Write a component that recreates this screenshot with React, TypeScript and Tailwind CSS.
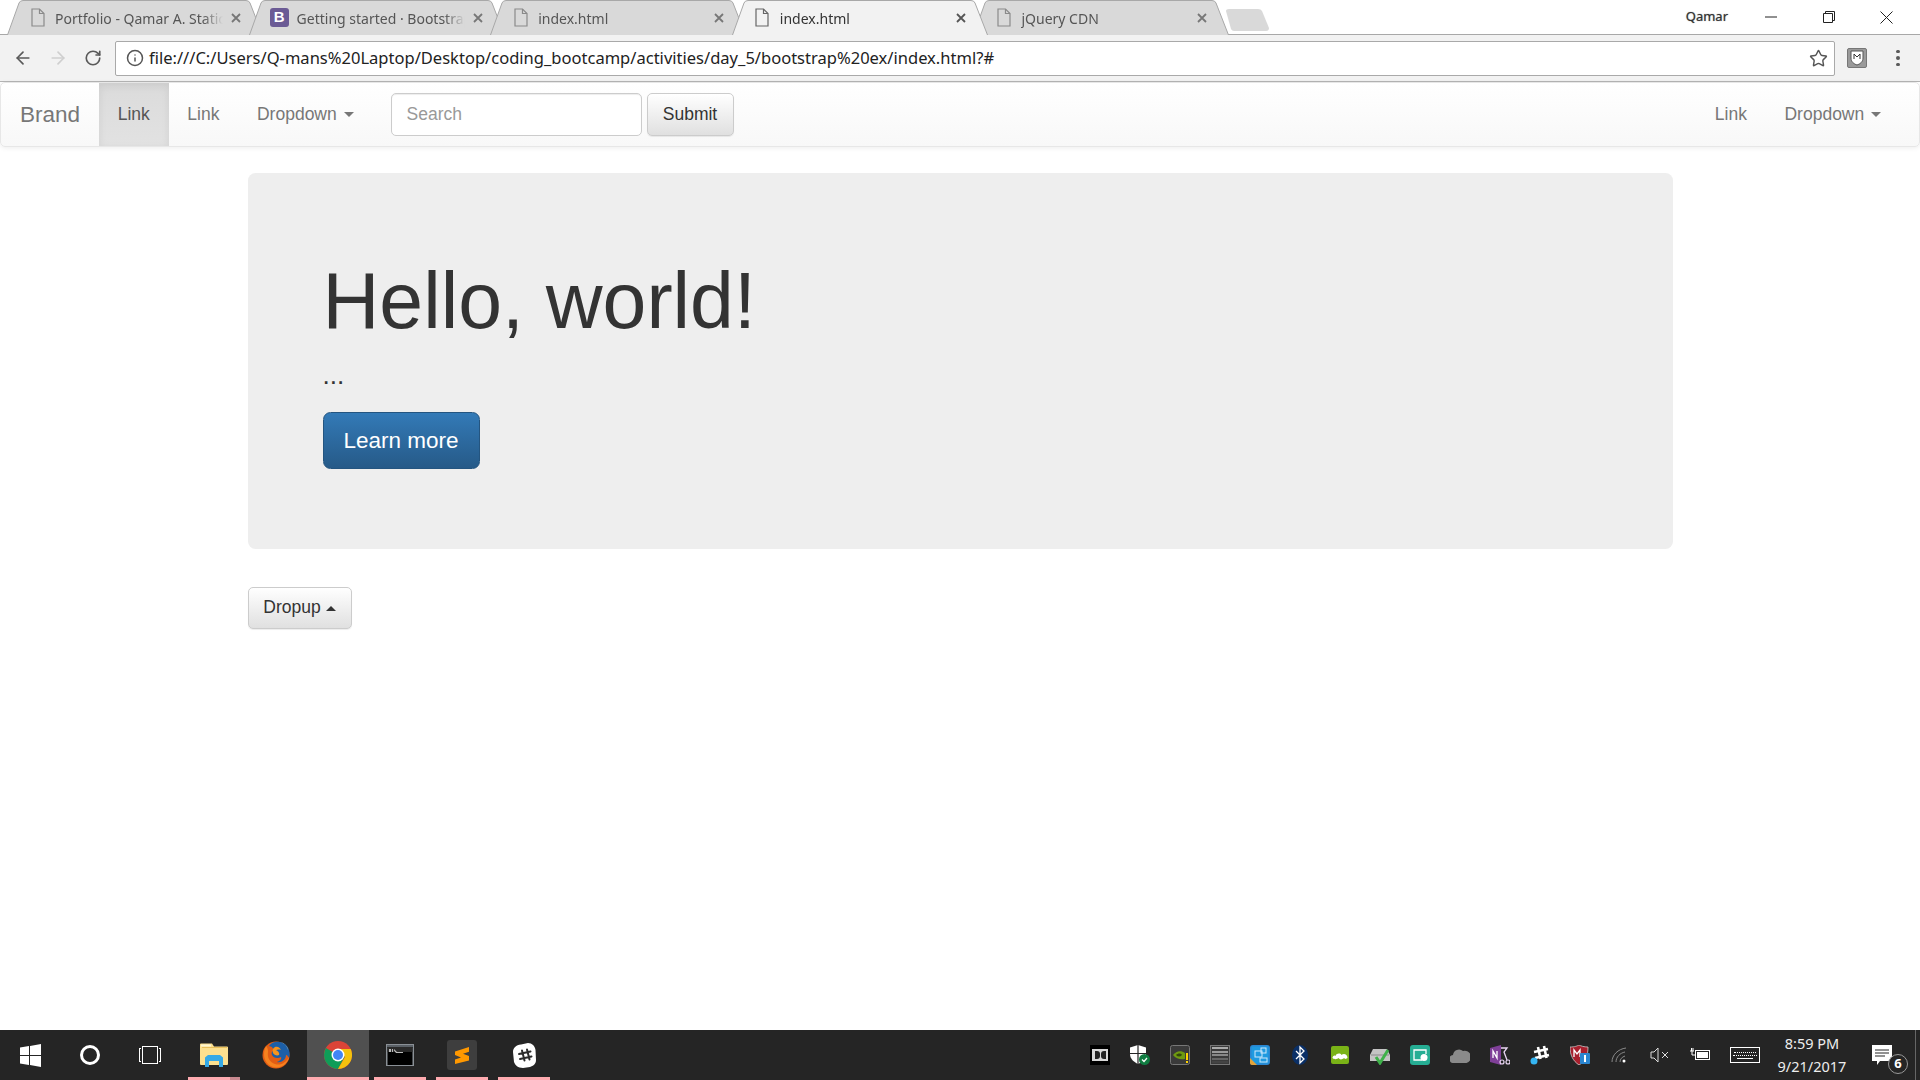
import { ArrowLeft, ArrowRight, Info, RotateCw, Star } from 'lucide-react';
import type { ReactNode } from 'react';

function FileIcon({ active }: { active?: boolean }) {
  return (
    <svg width="14" height="19" viewBox="0 0 14 19" fill="none" stroke={active ? '#666' : '#8a8a8a'} strokeWidth="1.2">
      <path d="M1 1h7.5L13 5.5V18H1z" />
      <path d="M8.5 1v4.5H13" />
    </svg>
  );
}

function BootstrapIcon() {
  return (
    <div className="flex h-[19px] w-[19px] items-center justify-center rounded-[3px] bg-[#6b5b95] font-['Liberation_Sans',sans-serif] text-[15px] font-bold text-white">
      B
    </div>
  );
}

function Tab({ title, icon, active, first }: { title: string; icon?: ReactNode; active?: boolean; first?: boolean }) {
  return (
    <div
      className={`relative h-[35px] w-[256px] shrink-0 ${first ? 'ml-[7px]' : '-ml-[14.4px]'} ${active ? 'z-10' : ''}`}
    >
      <svg className="absolute inset-0" width="256" height="35" viewBox="0 0 256 35">
        <path
          d="M0.5 35 L12 3 Q13 0.5 16 0.5 H239 Q242 0.5 243 3 L255.5 35"
          fill={active ? '#f2f2f2' : '#d9d9d9'}
          stroke="#a8a8a8"
        />
      </svg>
      <div className="relative flex h-full items-center pl-[21px]">
        <div className="flex w-[19px] justify-center">{icon ?? <FileIcon active={active} />}</div>
        <span
          className={`ml-[8px] w-[168px] overflow-hidden whitespace-nowrap pt-[2px] text-[14px] [mask-image:linear-gradient(to_right,black_88%,transparent)] ${active ? 'text-[#333]' : 'text-[#555]'}`}
        >
          {title}
        </span>
        <svg className="ml-[8px]" width="10" height="10" viewBox="0 0 10 10" stroke={active ? '#555' : '#777'} strokeWidth="1.8">
          <path d="M1 1l8 8M9 1l-8 8" />
        </svg>
      </div>
    </div>
  );
}

function Caret({ up }: { up?: boolean }) {
  return (
    <span
      className={`inline-block h-0 w-0 border-x-[5px] border-x-transparent align-middle ${
        up ? 'ml-[5px] border-b-[5px] border-b-current' : 'ml-[7px] border-t-[5px] border-t-current'
      }`}
    />
  );
}

function NavLink({ children, active }: { children: ReactNode; active?: boolean }) {
  return (
    <a
      className={`flex h-[63px] items-center px-[18.75px] ${
        active
          ? 'bg-gradient-to-b from-[#dbdbdb] to-[#e2e2e2] text-[#555] shadow-[inset_0_3px_9px_rgba(0,0,0,0.075)]'
          : 'text-[#777]'
      }`}
    >
      {children}
    </a>
  );
}

function WindowsLogo() {
  return (
    <svg width="21" height="23" viewBox="0 0 21 23" fill="#fff">
      <path d="M0 3.500l9-1.400V11H0zM10 1.900L21 0v11H10zM0 12h9v8.900l-9-1.400zM10 12h11v11l-11-1.900z" />
    </svg>
  );
}

function Explorer() {
  return (
    <svg width="28" height="24" viewBox="0 0 28 24">
      <path d="M0 1.500Q0 .5 1 .5h11l2 3h13q1 0 1 1V21q0 1-1 1H1q-1 0-1-1z" fill="#fce08f" />
      <path d="M1 1.500h10v2H1z" fill="#fff6d0" />
      <path d="M2 4.500h25" stroke="#e9bf5a" />
      <path d="M5 24V14.500L8 12h12l3 2.500V24h-4v-6H9v6z" fill="#35a9e6" />
    </svg>
  );
}

function Firefox() {
  return (
    <svg width="28" height="28" viewBox="0 0 28 28">
      <circle cx="14" cy="14" r="13.500" fill="#e25d14" />
      <path d="M7 5C10 0 20-1 25 5c3 4 3 9 2 12-1-2-2-3-3-3 0 5-5 8-9 7 3-1 5-3 4-5-3 2-8 1-9-2-1-2 0-4 2-5 0-1-2-2-2-3z" fill="#1c5fa8" />
      <path d="M19 1c3 1 6 4 7 8 0-3-3-6-7-8z" fill="#f8d98a" />
      <path d="M13 6c3-1 5 1 6 3-2-1-4 0-5 0 2 1 4 3 3 5-2 1-5 0-6-2-1-3 0-5 2-6z" fill="#f7941d" />
      <path d="M4 5C1 11 1 19 7 24c5 4 13 3 17-2 2-2 3-5 3-6-3 6-9 9-14 7C8 21 5 17 6 11c0-2 0-4-2-6z" fill="#f6821f" />
    </svg>
  );
}

function ChromeLogo() {
  return (
    <svg width="28" height="28" viewBox="0 0 28 28">
      <circle cx="14" cy="14" r="14" fill="#db4437" />
      <path d="M14 14 1.900 7 A14 14 0 0 0 14 28 L21 15z" fill="#0f9d58" />
      <path d="M14 8h12.700A14 14 0 0 1 14 28l7-12z" fill="#f4c20d" />
      <circle cx="14" cy="14" r="6.500" fill="#fff" />
      <circle cx="14" cy="14" r="5" fill="#4285f4" />
    </svg>
  );
}

function Terminal() {
  return (
    <svg width="28" height="22" viewBox="0 0 28 22">
      <rect width="28" height="22" fill="#8a9096" />
      <rect x="1" y="1" width="26" height="3" fill="#5a6066" />
      <rect x="1.500" y="3" width="25" height="18" fill="#000" />
      <rect x="1.500" y="3" width="25" height="5" fill="#2a2a2a" />
      <path d="M3 5h2v3H3zM6 5h1v3H6zM8 5l3 3h6v1h-7L8 6.500z" fill="#bbb" />
    </svg>
  );
}

function Sublime() {
  return (
    <div className="flex h-[30px] w-[30px] items-center justify-center rounded-[3px] bg-[#3e3e3e]">
      <svg width="16" height="19" viewBox="0 0 16 19" fill="#ff9800">
        <path d="M1 6.500 15 2v4.700L9 8.700l6 2.200V15.500L1 19v-4.600L7 12.400 1 10z" transform="translate(0 -1)" />
      </svg>
    </div>
  );
}

function SlackIcon() {
  return (
    <svg width="23" height="25" viewBox="0 0 23 25">
      <path d="M8 1.500 15 0c4 0 7 3 7.500 7L23 17c0 4-3 6-6 7l-7 1c-5 0-8-3-9-6L0 9c0-4 3-7 8-7.500z" fill="#fff" />
      <path d="M9 7.500l2.500 10M14 6.500l2.500 10M6 11l11.500-2.500M7 16l11.500-2.500" stroke="#2a2a2a" strokeWidth="2" strokeLinecap="round" />
    </svg>
  );
}

function TaskApp({ children, active, pink, split }: { children: ReactNode; active?: boolean; pink?: boolean; split?: boolean }) {
  return (
    <div className={`relative flex h-full w-[62px] items-center justify-center ${active ? 'bg-[#505050]' : ''}`}>
      {children}
      {pink && (
        <div className={`absolute bottom-0 h-[3px] bg-[#ffabb0] ${active ? 'inset-x-0' : 'inset-x-[5px]'}`} />
      )}
      {split && <div className="absolute bottom-0 right-[5px] h-[3px] w-[10px] bg-[#c98a90]" />}
    </div>
  );
}

const tray: ReactNode[] = [
  <div className="flex h-5 w-5 items-center justify-center bg-black">
    <div className="flex h-[12px] w-[16px] items-center justify-center gap-[1px] bg-[#d8d8d8]">
      <div className="h-[8px] w-[5px] rounded-r-[3px] bg-[#222]" />
      <div className="h-[8px] w-[5px] rounded-l-[3px] bg-[#222]" />
    </div>
  </div>,
  <svg width="20" height="20" viewBox="0 0 20 20">
    <path d="M8 0l8 2.500V9c0 5-4 8-8 10C4 17 0 14 0 9V2.500z" fill="#fff" />
    <path d="M8 0v19M0 8.500h16" stroke="#252525" strokeWidth="1.200" />
    <circle cx="14.500" cy="14.500" r="5.500" fill="#107c41" />
    <path d="M12 14.500l2 2 3-3.500" stroke="#fff" fill="none" strokeWidth="1.200" />
  </svg>,
  <svg width="20" height="20" viewBox="0 0 20 20">
    <rect x="0.500" y="0.500" width="19" height="19" rx="2" fill="#3a3a3a" stroke="#777" />
    <path d="M3 10c3-4 8-5 12-2v6c-4 1-9 0-12-4z" fill="#6f9a10" />
    <path d="M6 10c2-2 5-2 6 0-2 2-4 2-6 0z" fill="#33470a" />
    <rect x="16" y="8" width="2" height="7" fill="#ffd400" />
    <rect x="16" y="16" width="2" height="2" fill="#ffd400" />
  </svg>,
  <div className="flex h-5 w-5 flex-col justify-between border border-[#777] bg-[#3a3a3a] px-[1px] py-[1px]">
    <div className="h-[2px] bg-[#aaa]" />
    <div className="h-[2px] bg-[#9a9a9a]" />
    <div className="h-[2px] bg-[#888]" />
    <div className="h-[2px] bg-[#666]" />
    <div className="h-[2px] bg-[#444]" />
  </div>,
  <svg width="20" height="20" viewBox="0 0 20 20">
    <rect width="20" height="20" rx="3" fill="#2a85d0" />
    <rect x="1.500" y="1.500" width="17" height="17" fill="#1f9ae0" />
    <rect x="5" y="6" width="7" height="6" fill="none" stroke="#cfe7fb" />
    <rect x="11" y="3" width="5" height="5" fill="none" stroke="#cfe7fb" />
    <rect x="10" y="13" width="7" height="4" fill="none" stroke="#cfe7fb" />
    <path d="M0 13l7 7H2a2 2 0 0 1-2-2z" fill="#e3a43a" />
  </svg>,
  <svg width="16" height="20" viewBox="0 0 16 20">
    <ellipse cx="8" cy="10" rx="8" ry="10" fill="#0a2f66" />
    <path d="M4 6l8 8-4 4V2l4 4-8 8" fill="none" stroke="#fff" strokeWidth="1.300" />
  </svg>,
  <svg width="18" height="18" viewBox="0 0 18 18">
    <rect width="18" height="18" rx="2" fill="#7ab317" />
    <path d="M1.500 12c0-2 2-3 3-2 1-3 5-3 6-1 2-2 6-1 6 3l-2 1c-1-1-2-1-3 0-2 1-3 0-4-1-1 1-4 2-6 0z" fill="#fff" />
  </svg>,
  <svg width="20" height="20" viewBox="0 0 20 20">
    <path d="M3 4h14l3 6v6H0v-6z" fill="#c4c4c4" />
    <path d="M1 10h18" stroke="#8a8a8a" />
    <path d="M6 12l4 6 8-13" fill="none" stroke="#3fb14a" strokeWidth="3" />
  </svg>,
  <svg width="20" height="20" viewBox="0 0 20 20">
    <rect width="20" height="20" rx="3" fill="#26ae94" />
    <path d="M12 15H4V5h12v4" fill="none" stroke="#fff" strokeWidth="1.300" />
    <circle cx="14" cy="12.500" r="3.500" fill="#fff" />
  </svg>,
  <svg width="20" height="16" viewBox="0 0 20 16" fill="#8a8a8a">
    <path d="M4 16a4 4 0 0 1-1-8A6 6 0 0 1 13 4a4.500 4.500 0 0 1 3.500 12z" />
  </svg>,
  <svg width="20" height="20" viewBox="0 0 20 20">
    <path d="M0 3l11-3v20L0 17z" fill="#7f3f98" />
    <path d="M3 13V6l4 7V6" stroke="#fff" fill="none" strokeWidth="1.300" />
    <path d="M11 3h6l-3 4 3 8" stroke="#e9d6f2" fill="none" strokeWidth="1.300" />
    <circle cx="12" cy="17" r="2" fill="none" stroke="#e9d6f2" strokeWidth="1.200" />
    <circle cx="18" cy="17" r="2" fill="none" stroke="#e9d6f2" strokeWidth="1.200" />
  </svg>,
  <svg width="20" height="20" viewBox="0 0 20 20">
    <path d="M8 2l2.500 12M14 1l2.500 12M4 7l14-3M5 13l14-3" stroke="#fff" strokeWidth="2.600" />
    <circle cx="4" cy="16" r="3.500" fill="#35b5f2" />
  </svg>,
  <svg width="20" height="20" viewBox="0 0 20 20">
    <path d="M0 2c5 0 7-1 9-2 2 1 5 2 9 2 0 8-2 14-9 18C3 16 0 10 0 2z" fill="#a81f2d" stroke="#ccc" strokeWidth="0.800" />
    <path d="M4 12V5l3 4 3-4v7" stroke="#fff" fill="none" strokeWidth="1.300" />
    <rect x="10" y="8" width="10" height="11" rx="1" fill="#2a85d0" />
    <rect x="14" y="10" width="2" height="7" fill="#fff" />
  </svg>,
  <svg width="18" height="16" viewBox="0 0 18 16" fill="none" stroke="#8a8a8a" strokeWidth="1">
    <path d="M1 15C1 8 7 2 15 1M5 15c0-5 4-9 9-10M9 15c0-3 2-5 5-6" />
    <circle cx="13" cy="14" r="1.500" fill="#fff" stroke="none" />
  </svg>,
  <svg width="20" height="16" viewBox="0 0 20 16" fill="none" stroke="#ddd" strokeWidth="1">
    <path d="M1 5h3l4-4v14l-4-4H1zM12 5l6 6M18 5l-6 6" />
  </svg>,
  <svg width="20" height="14" viewBox="0 0 20 14" fill="none" stroke="#fff">
    <rect x="5.500" y="2.500" width="14" height="9" />
    <rect x="7" y="4" width="11" height="6" fill="#fff" stroke="none" />
    <path d="M0 3h4M1.500 0v3M3 0v3M2 3v4h3" />
  </svg>,
];

export default function App() {
  return (
    <div className="flex h-screen w-full flex-col overflow-hidden bg-white font-['Liberation_Sans',Arial,sans-serif] text-[17.5px] text-[#333]">
      {/* tab strip */}
      <div className="flex h-[35px] shrink-0 items-start border-b border-[#a8a8a8] bg-white font-['Noto_Sans',sans-serif]">
        <Tab first title="Portfolio - Qamar A. Static" />
        <Tab title="Getting started · Bootstrap" icon={<BootstrapIcon />} />
        <Tab title="index.html" />
        <Tab active title="index.html" />
        <Tab title="jQuery CDN" />
        <svg className="-ml-[3px] mt-[9px]" width="43" height="22" viewBox="0 0 43 22">
          <path d="M0 2 Q0 0 3 0H32Q35 0 36 2L43 19Q43 22 40 22H8Q6 22 5 20z" fill="#d9d9d9" />
        </svg>
        <div className="ml-auto mr-[4px] flex h-[34px] items-center text-[#333]">
          <span className="mr-[14px] text-[13px] [text-shadow:0_0_1px_#777]">Qamar</span>
          <div className="flex w-[58px] justify-center">
            <svg width="12" height="12" viewBox="0 0 12 12" stroke="#222"><path d="M0 6h12" /></svg>
          </div>
          <div className="flex w-[58px] justify-center">
            <svg width="12" height="12" viewBox="0 0 12 12" fill="none" stroke="#222"><path d="M.5 2.500h9v9h-9zM2.500 2.500v-2h9v9h-2" /></svg>
          </div>
          <div className="flex w-[58px] justify-center pr-[2px]">
            <svg width="13" height="13" viewBox="0 0 13 13" stroke="#222"><path d="M.5.5l12 12M12.500.5l-12 12" /></svg>
          </div>
        </div>
      </div>

      {/* toolbar */}
      <div className="flex h-[47px] shrink-0 items-center border-b border-[#b5b5b5] bg-[#f2f2f2] font-['Noto_Sans',sans-serif]">
        <div className="flex w-[41px] justify-center pl-[4px]"><ArrowLeft size={20} color="#5a5a5a" strokeWidth={2} /></div>
        <div className="flex w-[34px] justify-center"><ArrowRight size={20} color="#cfcfcf" strokeWidth={2} /></div>
        <div className="flex w-[34px] justify-center pl-[2px]"><RotateCw size={18} color="#5a5a5a" strokeWidth={2.2} /></div>
        <div className="ml-[6px] flex h-[35px] w-[1720px] items-center rounded-[2px] border border-[#a9a9a9] bg-white pl-[10px]">
          <Info size={18} color="#555" strokeWidth={2} />
          <span className="ml-[5px] whitespace-nowrap text-[16.55px] text-[#222]">
            file:///C:/Users/Q-mans%20Laptop/Desktop/coding_bootcamp/activities/day_5/bootstrap%20ex/index.html?#
          </span>
          <Star className="ml-auto mr-[6px]" size={19} color="#555" strokeWidth={1.8} />
        </div>
        <div className="ml-[12px] flex h-[20px] w-[20px] items-center justify-center rounded-[2px] border border-[#777] bg-[#9a9a9a]">
          <svg width="14" height="16" viewBox="0 0 14 16">
            <path d="M1 1h12v7c0 4-3 6-6 7-3-1-6-3-6-7z" fill="#fff" stroke="#555" />
            <path d="M4 9V4l3 3 3-3v5" fill="none" stroke="#333" />
          </svg>
        </div>
        <div className="ml-[29px] flex flex-col gap-[3px]">
          <div className="h-[3.500px] w-[3.500px] rounded-full bg-[#5a5a5a]" />
          <div className="h-[3.500px] w-[3.500px] rounded-full bg-[#5a5a5a]" />
          <div className="h-[3.500px] w-[3.500px] rounded-full bg-[#5a5a5a]" />
        </div>
      </div>

      {/* page */}
      <div className="min-h-0 flex-1">
        <nav className="mb-[26px] flex h-[65px] items-center rounded-[5px] border border-[#e7e7e7] bg-gradient-to-b from-white to-[#f8f8f8] shadow-[0_1px_5px_rgba(0,0,0,0.075)]">
          <a className="flex h-[63px] w-[98px] items-center pl-[19px] text-[22.5px] text-[#777]">Brand</a>
          <NavLink active>Link</NavLink>
          <NavLink>Link</NavLink>
          <NavLink>
            Dropdown
            <Caret />
          </NavLink>
          <div className="ml-[18px] flex h-[43px] w-[251px] items-center rounded-[5px] border border-[#ccc] bg-white px-[15px] text-[#999] shadow-[inset_0_1px_1px_rgba(0,0,0,0.075)]">
            Search
          </div>
          <button className="ml-[5px] h-[43px] w-[87px] rounded-[5px] border border-[#ccc] bg-gradient-to-b from-white to-[#e0e0e0] text-[#333] shadow-[0_1px_1px_rgba(0,0,0,0.075)]">
            Submit
          </button>
          <div className="ml-auto mr-[19px] flex">
            <NavLink>Link</NavLink>
            <NavLink>
              Dropdown
              <Caret />
            </NavLink>
          </div>
        </nav>

        <div className="mx-auto w-[1425px]">
          <div className="mb-[37.5px] h-[376px] rounded-[7.5px] bg-[#eee] px-[75px] pb-[60px] pt-[60px]">
            <h1 className="mb-[12.5px] mt-[25px] text-[78.75px] font-medium leading-[86.6px] text-[#333]">Hello, world!</h1>
            <p className="mb-[17.5px] text-[26.25px] font-extralight leading-[37.5px] text-[#333]">...</p>
            <button className="h-[57px] w-[157px] rounded-[7.5px] border border-[#245580] bg-gradient-to-b from-[#337ab7] to-[#265a88] text-[22.5px] text-white">
              Learn more
            </button>
          </div>
          <button className="h-[42px] w-[104px] rounded-[5px] border border-[#ccc] bg-gradient-to-b from-white to-[#e0e0e0] text-[#333] shadow-[0_1px_1px_rgba(0,0,0,0.075)]">
            Dropup
            <Caret up />
          </button>
        </div>
      </div>

      {/* taskbar */}
      <div className="flex h-[50px] shrink-0 items-center bg-[#252525] font-['Noto_Sans',sans-serif] text-white">
        <div className="flex w-[60px] justify-center"><WindowsLogo /></div>
        <div className="flex w-[60px] justify-center">
          <div className="h-[20px] w-[20px] rounded-full border-[3px] border-white" />
        </div>
        <div className="flex w-[60px] items-center justify-center gap-[1px]">
          <div className="h-[14px] w-[2px] border border-r-0 border-white" />
          <div className="h-[18px] w-[16px] border border-white" />
          <div className="h-[14px] w-[2px] border border-l-0 border-white" />
        </div>
        <div className="ml-[3px] flex h-full">
          <TaskApp pink split><Explorer /></TaskApp>
          <TaskApp><Firefox /></TaskApp>
          <TaskApp active pink><ChromeLogo /></TaskApp>
          <TaskApp pink><Terminal /></TaskApp>
          <TaskApp pink><Sublime /></TaskApp>
          <TaskApp pink><SlackIcon /></TaskApp>
        </div>
        <div className="ml-auto flex h-full items-center">
          {tray.map((icon, i) => (
            <div key={i} className="flex w-[40px] justify-center">{icon}</div>
          ))}
          <div className="flex w-[50px] justify-center">
            <div className="flex h-[16px] w-[30px] flex-col items-center justify-center gap-[2px] border border-white">
              <div className="h-[1px] w-[22px] border-t border-dotted border-white" />
              <div className="h-[1px] w-[24px] border-t border-dotted border-white" />
              <div className="h-[1px] w-[16px] bg-white" />
            </div>
          </div>
          <div className="flex w-[85px] flex-col items-center pr-[1px] text-[14.5px] leading-[23px] text-[#eee]">
            <span>8:59 PM</span>
            <span>9/21/2017</span>
          </div>
          <div className="relative flex h-full w-[60px] items-center justify-center">
            <svg width="20" height="20" viewBox="0 0 20 20" className="-translate-x-[3px]">
              <path d="M0 0h20v16H8l-3 4v-4H0z" fill="#fff" />
              <path d="M3 5h14M3 8h14M3 11h10" stroke="#252525" />
            </svg>
            <div className="absolute left-[33px] top-[24px] flex h-[20px] w-[20px] items-center justify-center rounded-full border border-[#999] bg-[#252525] text-[13px] font-bold">
              6
            </div>
          </div>
          <div className="h-full w-[5px] border-l border-[#666]" />
        </div>
      </div>
    </div>
  );
}
